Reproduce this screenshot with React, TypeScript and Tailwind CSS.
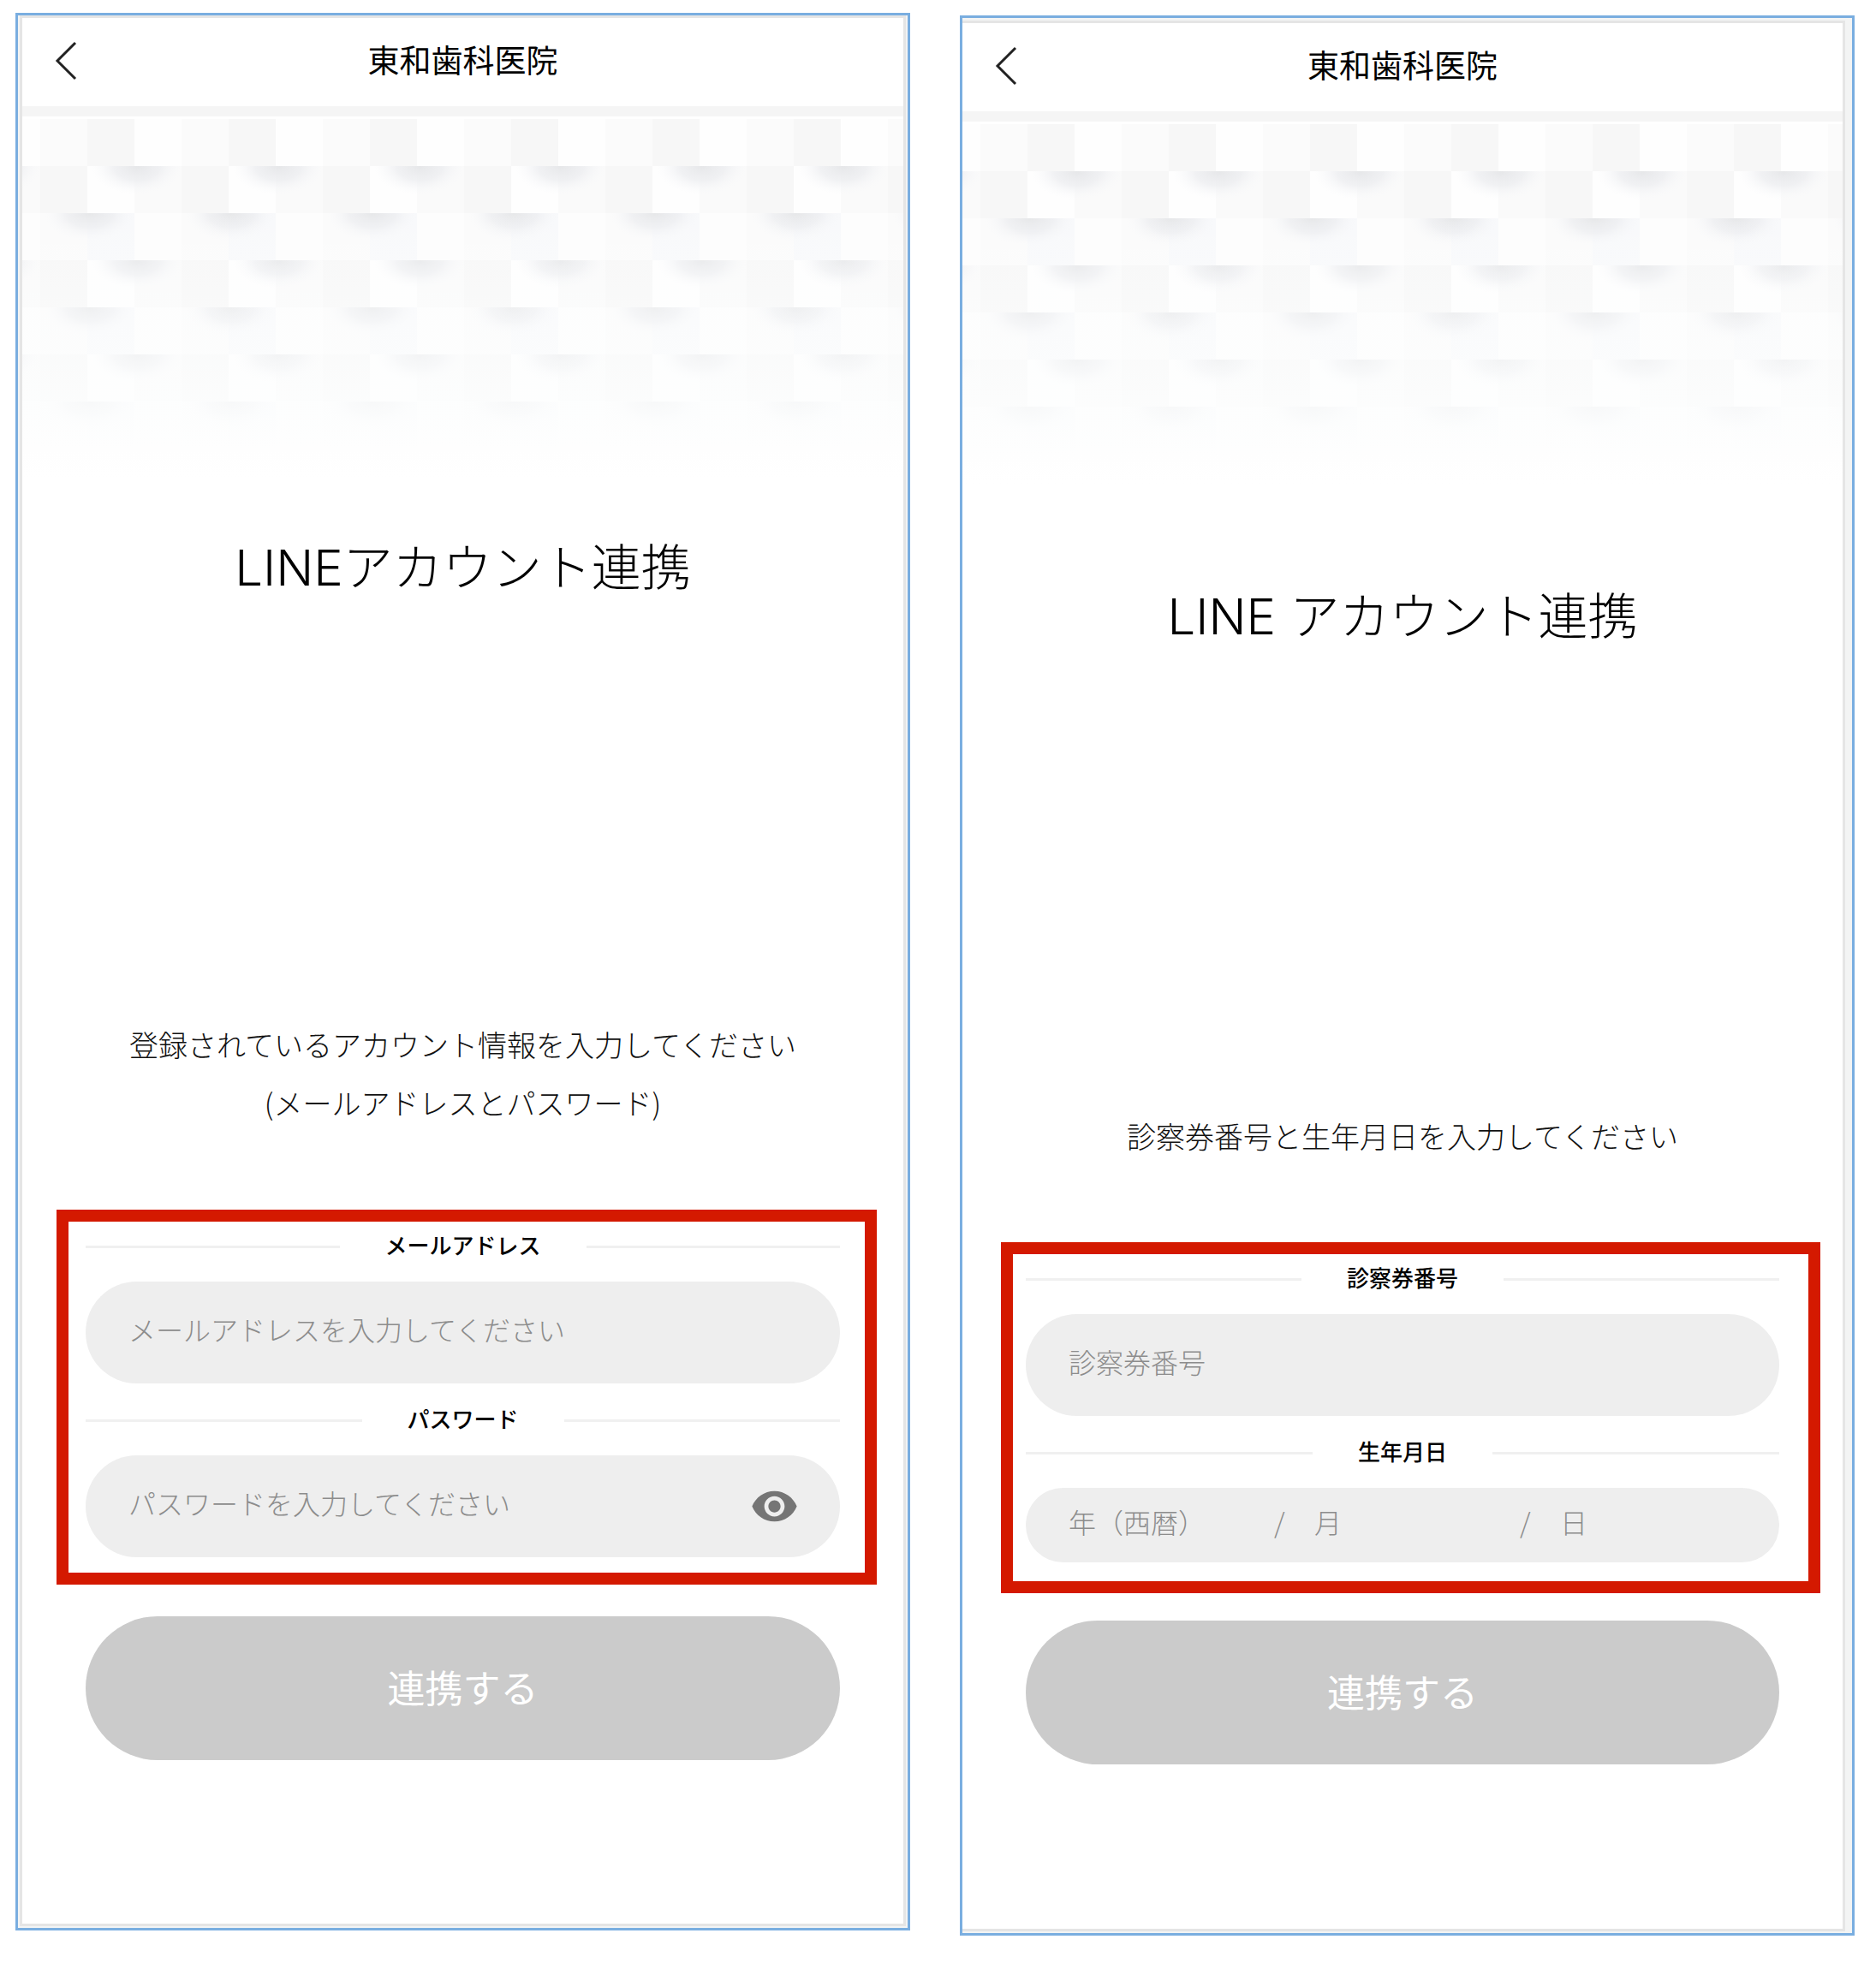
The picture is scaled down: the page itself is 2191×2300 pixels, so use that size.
import React, { useState } from 'react';

type ScreenProps = {
  frameClass: string;
  cardClass: string;
  children: React.ReactNode;
};

const BackButton = () => (
  <button type="button" aria-label="戻る" className="flex h-12 w-12 items-center justify-center">
    <svg viewBox="0 0 48 48" className="h-12 w-12" fill="none" stroke="#222222" strokeWidth="3">
      <path d="M34 3 L13 24 L34 45" />
    </svg>
  </button>
);

// White relief pattern that fades out towards the title
const HeroPattern = ({ id }: { id: string }) => (
  <svg className="mt-[3px] block h-[420px] w-full" aria-hidden="true">
    <defs>
      <radialGradient id={`${id}-shade`} gradientUnits="userSpaceOnUse" cx="0" cy="0" r="54" gradientTransform="scale(1 0.62)">
        <stop offset="0" stopColor="#e6e7e9" stopOpacity="1" />
        <stop offset="0.5" stopColor="#ecedf0" stopOpacity="0.75" />
        <stop offset="1" stopColor="#f8f9fb" stopOpacity="0" />
      </radialGradient>
      <linearGradient id={`${id}-fade`} x1="0" y1="0" x2="0" y2="1">
        <stop offset="0.25" stopColor="#fdfefe" stopOpacity="0" />
        <stop offset="0.6" stopColor="#fdfefe" stopOpacity="0.45" />
        <stop offset="0.82" stopColor="#fdfefe" stopOpacity="0.8" />
        <stop offset="0.92" stopColor="#fefefe" stopOpacity="1" />
        <stop offset="1" stopColor="#ffffff" stopOpacity="1" />
      </linearGradient>
      <pattern id={`${id}-top`} x="21" y="0" width="165" height="55" patternUnits="userSpaceOnUse">
        <rect width="55" height="55" fill="#fbfbfb" />
        <rect x="55" width="55" height="55" fill="#f7f7f7" />
        <rect x="110" width="55" height="55" fill="#fefefe" />
      </pattern>
      <pattern id={`${id}-tile`} x="21" y="55" width="165" height="110" patternUnits="userSpaceOnUse">
        <rect width="55" height="55" fill="#f7f7f7" />
        <rect x="55" width="55" height="55" fill="#fefefe" />
        <rect x="110" width="55" height="55" fill="#fafafa" />
        <rect y="55" width="55" height="55" fill="#fbfbfb" />
        <rect x="55" y="55" width="55" height="55" fill="#f8f9fb" />
        <rect x="110" y="55" width="55" height="55" fill="#fdfdfd" />
        <g transform="translate(113 0)">
          <rect x="-52" width="104" height="34" fill={`url(#${id}-shade)`} />
        </g>
        <g transform="translate(58 55)">
          <rect x="-52" width="104" height="34" fill={`url(#${id}-shade)`} />
        </g>
      </pattern>
    </defs>
    <rect width="100%" height="55" fill={`url(#${id}-top)`} />
    <rect y="55" width="100%" height="365" fill={`url(#${id}-tile)`} />
    <rect width="100%" height="420" fill={`url(#${id}-fade)`} />
  </svg>
);

const Screen = ({ frameClass, cardClass, children }: ScreenProps) => (
  <section className={`border-[3px] border-[#7aaee0] bg-[#f3f4f4] ${frameClass}`}>
    <div className={`border-[#e5e5e5] bg-white ${cardClass}`}>
      <header className="grid h-[115px] grid-cols-[1fr_auto_1fr] items-center border-b-12 border-[#f5f5f5] px-7 pb-1">
        <BackButton />
        <p className="pb-1 text-[37px] leading-[48px] text-black">東和歯科医院</p>
      </header>
      {children}
    </div>
  </section>
);

const Title = ({ text }: { text: string }) => (
  <h1 className="text-center font-['Inter','Noto_Sans_CJK_JP',sans-serif] text-[58px] leading-20 font-light text-black">
    {text}
  </h1>
);

const FieldLabel = ({ htmlFor, text }: { htmlFor: string; text: string }) => (
  <div className="flex items-center gap-[53px]">
    <span className="h-[3px] flex-1 bg-[#f0f0f0]" />
    <label htmlFor={htmlFor} className="pb-1 text-[26px] leading-9 font-medium text-black">
      {text}
    </label>
    <span className="h-[3px] flex-1 bg-[#f0f0f0]" />
  </div>
);

const SubmitButton = () => (
  <button type="submit" className="block h-[168px] w-full rounded-full bg-[#cbcbcb] pb-1 text-[44px] text-white">
    連携する
  </button>
);

const AccountScreen = () => {
  const [visible, setVisible] = useState(false);

  return (
    <Screen frameClass="pr-0.5 pl-0.5 pb-0.5" cardClass="border-[3px] pb-[191px]">
      <HeroPattern id="account" />
      <div className="mt-16 mb-[483px]">
        <Title text="LINEアカウント連携" />
      </div>
      <p className="text-center text-[34px] leading-[68px] font-light text-[#111111]">
        登録されているアカウント情報を入力してください
        <br />
        (メールアドレスとパスワード)
      </p>
      <form onSubmit={(e) => e.preventDefault()}>
        <div className="mt-[91px] mr-[31px] ml-10 border-14 border-[#d41900] pt-[9px] pr-[29px] pb-[18px] pl-5">
          <FieldLabel htmlFor="email" text="メールアドレス" />
          <input
            id="email"
            type="email"
            placeholder="メールアドレスを入力してください"
            className="mt-[21px] mb-[23px] block h-[119px] w-full rounded-full bg-[#eeeeee] px-[50px] pb-2.5 text-[32px] font-light outline-none placeholder:text-[#8c8c8c]"
          />
          <FieldLabel htmlFor="password" text="パスワード" />
          <div className="mt-[21px] flex h-[119px] items-center rounded-full bg-[#eeeeee] pr-12 pl-[50px]">
            <input
              id="password"
              type={visible ? 'text' : 'password'}
              placeholder="パスワードを入力してください"
              className="h-full min-w-0 flex-1 bg-transparent pb-2.5 text-[32px] font-light outline-none placeholder:text-[#8c8c8c]"
            />
            <button type="button" aria-label="パスワードを表示" onClick={() => setVisible(!visible)}>
              <svg viewBox="0 0 24 24" className="h-[57px] w-[57px]" fill="#757575">
                <path d="M12 4.5C7 4.5 2.73 7.61 1 12c1.73 4.39 6 7.5 11 7.5s9.27-3.11 11-7.5c-1.73-4.39-6-7.5-11-7.5zM12 17c-2.76 0-5-2.24-5-5s2.24-5 5-5 5 2.24 5 5-2.24 5-5 5zm0-8c-1.66 0-3 1.34-3 3s1.34 3 3 3 3-1.34 3-3-1.34-3-3-3z" />
              </svg>
            </button>
          </div>
        </div>
        <div className="mt-[37px] px-[74px]">
          <SubmitButton />
        </div>
      </form>
    </Screen>
  );
};

const dateInput = 'h-full min-w-0 bg-transparent pb-2.5 text-[32px] font-light outline-none placeholder:text-[#8c8c8c]';

const PatientScreen = () => (
  <Screen frameClass="mt-[3px] pt-[3px] pr-2 pb-0.5" cardClass="border-y-[3px] border-r-[3px] pb-48">
    <HeroPattern id="patient" />
    <div className="mt-[115px] mb-[533px]">
      <Title text="LINE アカウント連携" />
    </div>
    <p className="text-center text-[34px] leading-[68px] font-light text-[#111111]">
      診察券番号と生年月日を入力してください
    </p>
    <form onSubmit={(e) => e.preventDefault()}>
      <div className="mt-[90px] mr-[26px] ml-[45px] border-14 border-[#d41900] pt-[9px] pr-[34px] pb-[22px] pl-[15px]">
        <FieldLabel htmlFor="patient-number" text="診察券番号" />
        <input
          id="patient-number"
          type="text"
          placeholder="診察券番号"
          className="mt-[21px] mb-[23px] block h-[119px] w-full rounded-full bg-[#eeeeee] px-[50px] pb-2.5 text-[32px] font-light outline-none placeholder:text-[#8c8c8c]"
        />
        <FieldLabel htmlFor="birth-year" text="生年月日" />
        <div className="mt-[21px] flex h-[87px] items-center rounded-full bg-[#eeeeee] px-[50px] text-[32px] font-light text-[#8c8c8c]">
          <input id="birth-year" type="text" placeholder="年（西暦）" className={`w-60 ${dateInput}`} />
          <span className="w-[47px] pb-2.5">/</span>
          <input aria-label="月" type="text" placeholder="月" className={`w-60 ${dateInput}`} />
          <span className="w-[47px] pb-2.5">/</span>
          <input aria-label="日" type="text" placeholder="日" className={`flex-1 ${dateInput}`} />
        </div>
      </div>
      <div className="mt-8 px-[74px]">
        <SubmitButton />
      </div>
    </form>
  </Screen>
);

const App = () => {
  return (
    <main
      lang="ja"
      className="grid min-h-screen grid-cols-2 items-start gap-[58px] bg-white pt-[15px] pr-[25px] pl-[18px] font-['Noto_Sans_CJK_JP',sans-serif]"
    >
      <AccountScreen />
      <PatientScreen />
    </main>
  );
};

export default App;
